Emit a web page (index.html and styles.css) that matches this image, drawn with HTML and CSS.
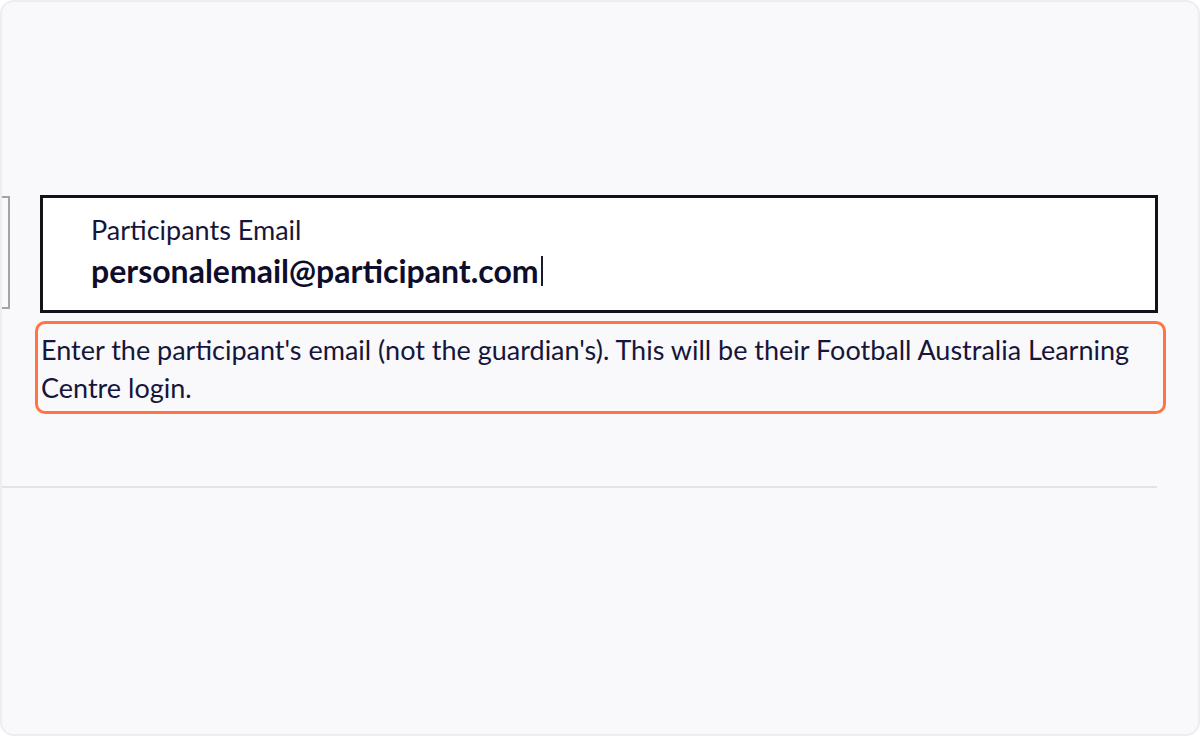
FILE: index.html
```html
<!DOCTYPE html>
<html lang="en">
<head>
    <meta charset="UTF-8">
    <meta name="viewport" content="width=device-width, initial-scale=1.0">
    <title>Participant details</title>
    <link rel="stylesheet" href="styles.css">
</head>
<body>
<div class="frame">
    <div class="field-row">
        <div class="prev-field"></div>
        <div class="field-col">
            <div class="input-box">
                <div class="input-label">Participants Email</div>
                <div class="input-value">personalemail@participant.com<span class="caret"></span></div>
            </div>
            <div class="hint">Enter the participant's email (not the guardian's). This will be their Football Australia Learning Centre login.</div>
        </div>
    </div>
    <div class="divider"></div>
</div>
</body>
</html>
```

FILE: styles.css
```css
body {
    margin: 0;
    background: #ffffff;
    font-family: 'Lato', 'Noto Sans', sans-serif;
    color: #16163a;
}

.frame {
    box-sizing: border-box;
    height: 736px;
    width: 1200px;
    border: 2px solid #eeeef1;
    border-radius: 14px;
    background: #f9f9fb;
    overflow: hidden;
}

.field-row {
    display: flex;
    align-items: flex-start;
    margin-top: 193px;
}

.prev-field {
    box-sizing: border-box;
    width: 8px;
    height: 113px;
    margin-top: 1px;
    border: 2px solid #a3a3aa;
    border-left: none;
}

.field-col {
    margin-left: 30px;
    width: 1118px;
}

.input-box {
    box-sizing: border-box;
    height: 118px;
    border: 3px solid #121218;
    background: #ffffff;
    padding: 16px 0 0 48px;
}

.input-label {
    font-size: 27px;
    line-height: 32px;
    color: #16163a;
}

.input-value {
    display: flex;
    align-items: center;
    margin-top: 3px;
    font-size: 32px;
    font-weight: 700;
    line-height: 44px;
    color: #0e0e2c;
}

.caret {
    display: inline-block;
    width: 2px;
    height: 30px;
    margin-left: 2px;
    background: #1a1a2e;
}

.hint {
    box-sizing: border-box;
    margin: 8px 0 0 -5px;
    width: 1131px;
    border: 3px solid #ff7444;
    border-radius: 10px;
    padding: 7px 3px 4px;
    font-size: 27px;
    line-height: 38px;
    color: #16163a;
}

.divider {
    margin-top: 72px;
    width: 1155px;
    height: 2px;
    background: #e3e3e7;
}
```
